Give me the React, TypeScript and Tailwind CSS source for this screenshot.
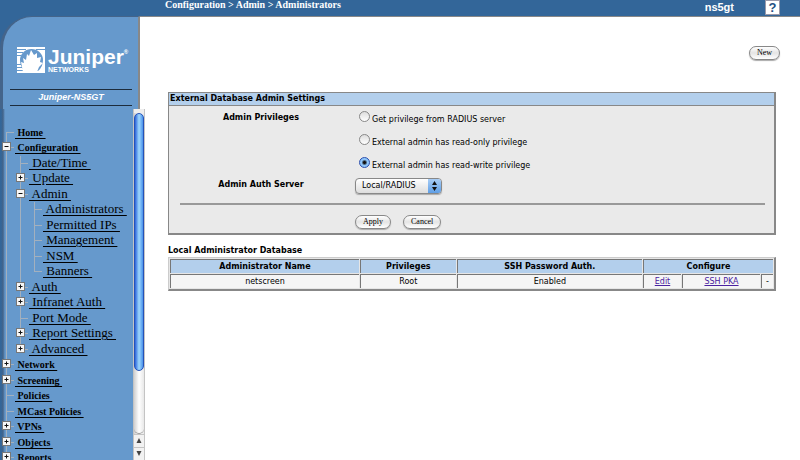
import React from 'react';

type TreeNode = { label: string; level: 1 | 2 | 3; toggle?: '+' | '-'; first?: boolean; last?: boolean };

const nodes: TreeNode[] = [
  { label: 'Home', level: 1, first: true },
  { label: 'Configuration', level: 1, toggle: '-' },
  { label: 'Date/Time', level: 2 },
  { label: 'Update', level: 2, toggle: '+' },
  { label: 'Admin', level: 2, toggle: '-' },
  { label: 'Administrators', level: 3 },
  { label: 'Permitted IPs', level: 3 },
  { label: 'Management', level: 3 },
  { label: 'NSM', level: 3 },
  { label: 'Banners', level: 3, last: true },
  { label: 'Auth', level: 2, toggle: '+' },
  { label: 'Infranet Auth', level: 2, toggle: '+' },
  { label: 'Port Mode', level: 2 },
  { label: 'Report Settings', level: 2, toggle: '+' },
  { label: 'Advanced', level: 2, toggle: '+', last: true },
  { label: 'Network', level: 1, toggle: '+' },
  { label: 'Screening', level: 1, toggle: '+' },
  { label: 'Policies', level: 1 },
  { label: 'MCast Policies', level: 1 },
  { label: 'VPNs', level: 1, toggle: '+' },
  { label: 'Objects', level: 1, toggle: '+' },
  { label: 'Reports', level: 1, toggle: '+' },
];

function Branch({ first, last, tick }: { first?: boolean; last?: boolean; tick?: boolean }) {
  return (
    <svg className="block h-4 w-[14px] shrink-0" viewBox="0 0 14 16" stroke="#a3b0be" aria-hidden="true">
      <path d={first ? 'M5.5 7V16' : last ? 'M5.5 0V8' : 'M5.5 0V16'} />
      {tick && <path d="M5 7.5H13" />}
    </svg>
  );
}

function Toggle({ node }: { node: TreeNode }) {
  return (
    <button type="button" aria-label={`Toggle ${node.label}`} className="block h-4 w-[14px] shrink-0">
      <svg className="block h-4 w-[14px]" viewBox="0 0 14 16" aria-hidden="true">
        <path d={node.last ? 'M5.5 0V8M5 7.5H13' : 'M5.5 0V16M5 7.5H13'} stroke="#a3b0be" />
        <rect x="1.5" y="2.5" width="8" height="8" fill="#f6f6f6" stroke="#777" />
        <path d={node.toggle === '+' ? 'M3.5 6.5H7.5M5.5 4.5V8.5' : 'M3.5 6.5H7.5'} stroke="#111" />
      </svg>
    </button>
  );
}

function TreeRow({ node }: { node: TreeNode }) {
  return (
    <li className="flex items-start odd:h-[15px] even:h-4">
      {node.level > 1 && <Branch />}
      {node.level > 2 && <Branch />}
      {node.toggle ? <Toggle node={node} /> : <Branch first={node.first} last={node.last} tick />}
      <a
        href="#"
        className={`whitespace-pre text-black underline underline-offset-2 ${node.level === 1 ? 'text-[10px] font-bold leading-[15px]' : 'text-[13px] leading-[13px]'}`}
      >
        {` ${node.label} `}
      </a>
    </li>
  );
}

function Logo() {
  return (
    <div className="flex gap-[3px] text-white">
      <svg className="h-[26px] w-7 shrink-0" viewBox="0 0 28 26" aria-hidden="true">
        <path d="M0 0H28V26H0Z" fill="#fff" />
        <path d="M0 2.5H9M0 5.5H6M0 8.5H4M0 17.5H4M0 20.5H6M0 23.5H8M19 2.5H28" stroke="#6699cc" />
        <path d="M3 13A11.5 11 0 0 1 26 13Q26 20 21 24H8Q3 20 3 13Z" fill="#6699cc" />
        <path d="M6 25L4 15L7 16L6 11L9 13L10 7L12 9L14 3L17 8L20 6L20 11L24 10L23 15L26 16L22 20L20 25Z" fill="#fff" />
      </svg>
      <div className="flex flex-col">
        <div className="flex items-start text-[21px] font-bold leading-5">
          Juniper<span className="text-[6px] leading-[10px]">®</span>
        </div>
        <div className="text-[7px] font-bold leading-[6px]">NETWORKS</div>
      </div>
    </div>
  );
}

function Scrollbar() {
  return (
    <div
      className="flex w-3 shrink-0 flex-col border-x border-[#c4c4c4] bg-gradient-to-r from-[#d0d0d0] via-white to-[#e8e8e8]"
      aria-hidden="true"
    >
      <div className="h-1 bg-[#eee]" />
      <div className="h-[258px] rounded-full border border-[#2552b8] bg-gradient-to-r from-[#2f62d8] via-[#9fd8fd] to-[#4a92ea]" />
      <div className="flex-1 rounded-b-full border-b border-[#999]" />
      <svg className="h-[26px] w-[10px] bg-[#f2f2f2]" viewBox="0 0 10 26">
        <path d="M0 .5H10M0 13.5H10" stroke="#c4c4c4" />
        <path d="M5 4L7.5 9H2.5ZM5 22L7.5 17H2.5Z" fill="#444" />
      </svg>
    </div>
  );
}

function PillButton({ children }: { children: React.ReactNode }) {
  return (
    <button
      type="button"
      className="h-[14px] rounded-full border border-[#888] bg-gradient-to-b from-white via-[#e4e4e4] to-white px-[7px] font-['Liberation_Serif',serif] text-[8px] leading-[10px] text-black shadow-[0_1px_1px_#aaa]"
    >
      {children}
    </button>
  );
}

function PrivilegeOption({ id, label, checked }: { id: string; label: string; checked?: boolean }) {
  return (
    <div className="flex h-[22px] items-start gap-[2px] pl-1">
      <input
        id={id}
        type="radio"
        name="privilege"
        defaultChecked={checked}
        className="size-[11px] appearance-none rounded-full border border-[#888] bg-gradient-to-b from-[#ddd] to-white checked:border-[#2b4fae] checked:bg-[radial-gradient(circle,#111_0_1px,#8ec5fa_3px)]"
      />
      <label htmlFor={id} className="pt-[3px] leading-3">{label}</label>
    </div>
  );
}

const th = 'h-[14px] border-l border-t border-[#777] bg-[#b3cfec] p-0 font-bold leading-3';
const td = 'h-[14px] border-l border-t border-[#777] bg-[#f5f5f5] p-0 leading-3';

export default function App() {
  return (
    <div className="flex h-screen flex-col overflow-hidden bg-white font-['Liberation_Sans',Arial,sans-serif]">
      <header className="flex h-4 shrink-0 items-start bg-[#336699] text-white">
        <div className="flex-1 pl-[165px] font-['Liberation_Serif',serif] text-[10px] font-bold leading-[10px]">
          Configuration &gt; Admin &gt; Administrators
        </div>
        <div className="pr-[31px] text-[11px] font-bold leading-[14px]">ns5gt</div>
        <button
          type="button"
          aria-label="Help"
          className="mr-5 size-[15px] border border-[#99a] bg-white text-[13px] font-bold leading-[13px] text-[#234f84]"
        >
          ?
        </button>
      </header>

      <div className="flex min-h-0 flex-1">
        <aside className="flex w-[145px] shrink-0 flex-col">
          <div className="shrink-0 border-t border-[#888]">
            <div className="-mt-px mr-[5px] bg-[#336699]">
              <div className="flex flex-col rounded-tl-[32px] border-l-[3px] border-r-2 border-t border-l-[#44648a] border-r-[#888] border-t-[#44648a] bg-[#6699cc] pl-[7px] pr-[6px] pt-[30px]">
                <div className="pl-[7px]">
                  <Logo />
                </div>
                <div className="mt-4 border-y border-[#1c2c3c] text-center text-[9px] font-bold italic leading-[15px] text-white">
                  Juniper-NS5GT
                </div>
                <div className="h-[3px]" />
              </div>
            </div>
          </div>
          <div className="flex min-h-0 flex-1">
            <nav className="flex-1 overflow-hidden bg-[linear-gradient(to_right,#336699_1px,#44648a_3px,#6699cc_5px)] pl-px pt-4 font-['Liberation_Serif','Times_New_Roman',serif]">
              <ul>
                {nodes.map((node) => (
                  <TreeRow key={node.label} node={node} />
                ))}
              </ul>
            </nav>
            <Scrollbar />
          </div>
        </aside>

        <main className="flex min-w-0 flex-1 flex-col border-t border-[#888] pl-[23px] pr-6 font-['DejaVu_Sans',Verdana,sans-serif] text-[8px] text-black">
          <div className="-mr-1 flex justify-end pt-[29px]">
            <PillButton>New</PillButton>
          </div>

          <section className="mt-8 border border-b-2 border-r-2 border-[#888] bg-[#eaeaea]">
            <h2 className="border-b border-[#888] bg-[#b3cfec] pl-px font-bold leading-[12px]">External Database Admin Settings</h2>
            <form className="pb-[4px] pt-[5px]">
              <div className="grid grid-cols-[184px_1fr]">
                <div className="pt-[1px] text-center font-bold leading-3">Admin Privileges</div>
                <div className="flex flex-col gap-px pl-[2px]">
                  <PrivilegeOption id="radius" label="Get privilege from RADIUS server" />
                  <PrivilegeOption id="read-only" label="External admin has read-only privilege" />
                  <PrivilegeOption id="read-write" label="External admin has read-write privilege" checked />
                </div>
                <label htmlFor="auth-server" className="text-center font-bold leading-3">Admin Auth Server</label>
                <div className="flex pl-[2px]">
                  <div className="-mt-px flex rounded-[4px] border border-[#888] bg-gradient-to-b from-white to-[#ddd] shadow-[0_1px_1px_#aaa]">
                    <select id="auth-server" className="h-[14px] w-[72px] appearance-none pl-[6px] leading-[14px]">
                      <option>Local/RADIUS</option>
                    </select>
                    <svg className="h-[14px] w-[13px] rounded-r-[3px] bg-gradient-to-b from-[#a8cdf5] to-[#5f9fe6]" viewBox="0 0 13 14" aria-hidden="true">
                      <path d="M6.5 2L9 6H4ZM6.5 12L9 8H4Z" fill="#111" />
                    </svg>
                  </div>
                </div>
              </div>
              <hr className="ml-[11px] mr-[9px] mt-[9px] border-t-2 border-[#999]" />
              <div className="mt-[10px] flex gap-3 pl-[186px]">
                <PillButton>Apply</PillButton>
                <PillButton>Cancel</PillButton>
              </div>
            </form>
          </section>

          <h2 className="mt-[10px] font-bold leading-[12px]">Local Administrator Database</h2>
          <table className="w-full table-fixed border-separate border-spacing-px border border-b-2 border-r-2 border-[#ccc] border-b-[#888] border-r-[#888] bg-[#e6e6e6] text-center">
            <colgroup>
              <col className="w-[189px]" />
              <col className="w-[16%]" />
              <col />
              <col className="w-[38px]" />
              <col className="w-[78px]" />
              <col className="w-[12px]" />
            </colgroup>
            <thead>
              <tr>
                <th className={th}>Administrator Name</th>
                <th className={th}>Privileges</th>
                <th className={th}>SSH Password Auth.</th>
                <th className={th} colSpan={3}>Configure</th>
              </tr>
            </thead>
            <tbody>
              <tr>
                <td className={td}>netscreen</td>
                <td className={td}>Root</td>
                <td className={td}>Enabled</td>
                <td className={td}><a href="#" className="text-[#4a22a0] underline">Edit</a></td>
                <td className={td}><a href="#" className="text-[#4a22a0] underline">SSH PKA</a></td>
                <td className={td}>-</td>
              </tr>
            </tbody>
          </table>
        </main>
      </div>
    </div>
  );
}
